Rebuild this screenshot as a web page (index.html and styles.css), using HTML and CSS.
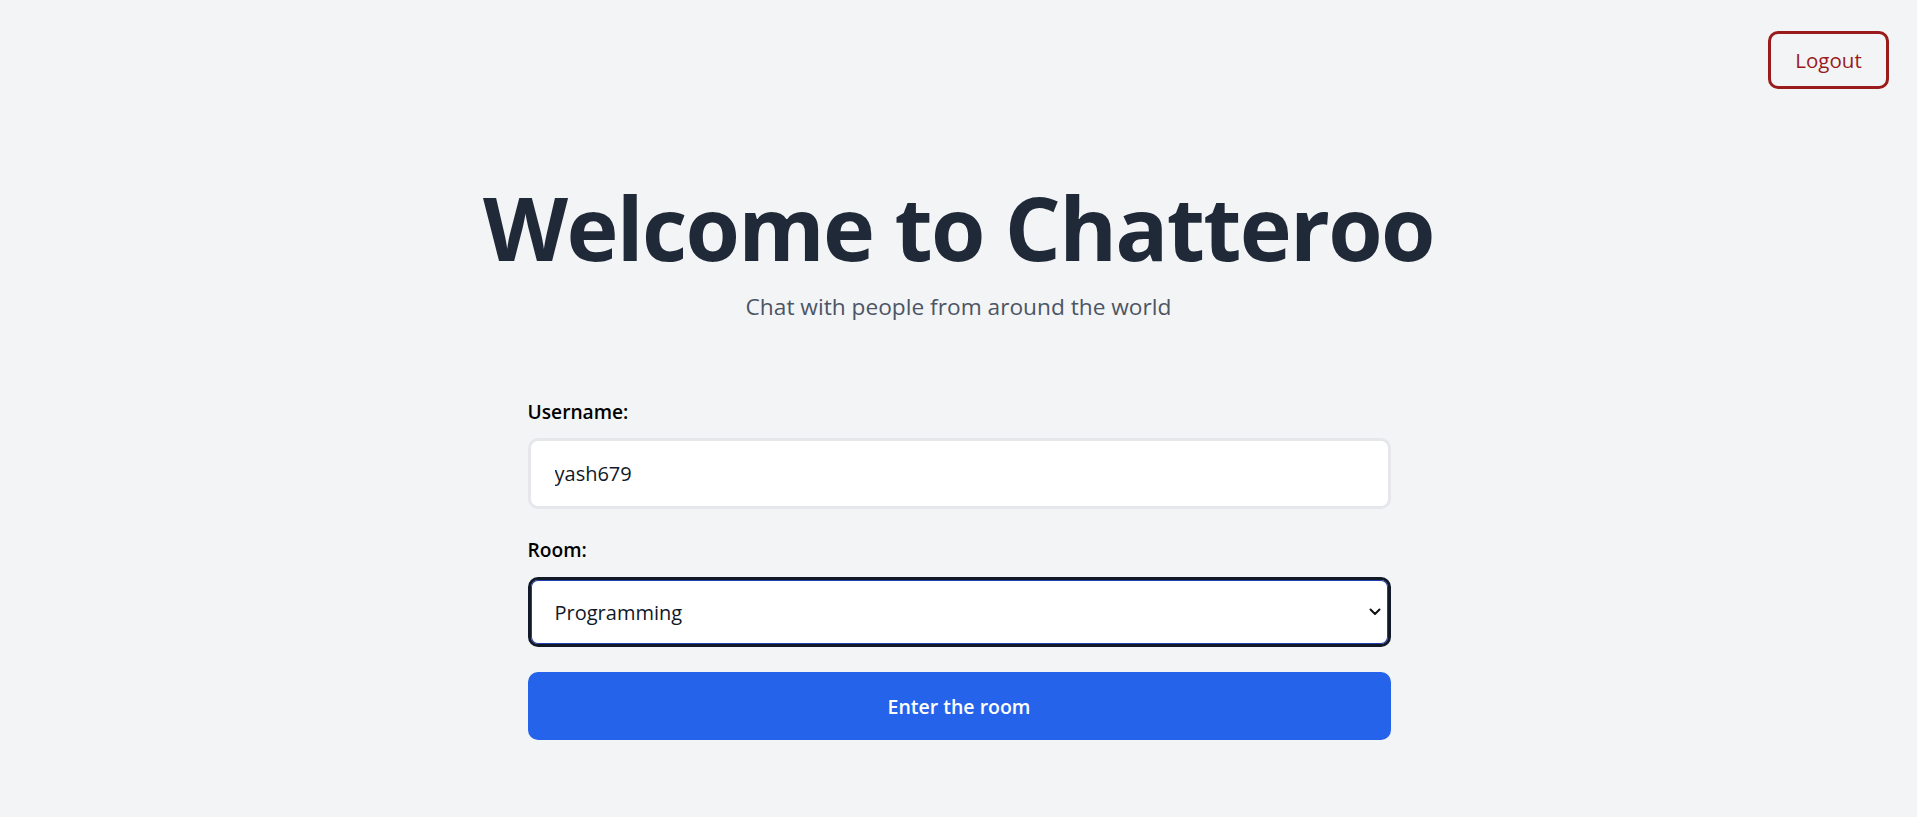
FILE: index.html
```html
<!DOCTYPE html>
<html lang="en">
<head>
<meta charset="utf-8">
<title>Chatteroo</title>
<link rel="stylesheet" href="styles.css">
</head>
<body>
  <button class="logout" type="button">Logout</button>
  <main class="main">
    <h1 class="title">Welcome to Chatteroo</h1>
    <p class="subtitle">Chat with people from around the world</p>
    <form class="form">
      <label class="label" for="username">Username:</label>
      <input class="field" id="username" type="text" value="yash679">
      <label class="label label-room" for="room">Room:</label>
      <div class="select-wrap">
        <select class="field select" id="room">
          <option>Programming</option>
          <option>General</option>
          <option>Gaming</option>
        </select>
        <svg class="chevron" width="12" height="8" viewBox="0 0 12 8" aria-hidden="true">
          <path d="M1.5 1.5 L6 6 L10.5 1.5" fill="none" stroke="#111" stroke-width="2" stroke-linecap="round" stroke-linejoin="round"/>
        </svg>
      </div>
      <button class="enter" type="button">Enter the room</button>
    </form>
  </main>
</body>
</html>
```
FILE: styles.css
```css
* { box-sizing: border-box; }

html, body {
  margin: 0;
  padding: 0;
}

body {
  background: #f3f4f6;
  font-family: "Open Sans", "Noto Sans", sans-serif;
  color: #111827;
  min-height: 817px;
}

.logout {
  position: absolute;
  top: 31px;
  right: 28px;
  width: 121px;
  height: 58px;
  border: 3px solid #991b1b;
  border-radius: 10px;
  background: transparent;
  color: #991b1b;
  font-family: inherit;
  font-size: 20.5px;
  font-weight: 500;
  padding: 0;
}

.main {
  display: flex;
  flex-direction: column;
  align-items: center;
  padding-top: 182px;
}

.title {
  margin: 0;
  font-size: 88px;
  line-height: 90px;
  font-weight: 700;
  color: #1f2937;
  letter-spacing: -1.7px;
}

.subtitle {
  margin: 19px 0 0;
  font-size: 22.7px;
  line-height: 32px;
  color: #4b5563;
}

.form {
  width: 863px;
  margin-left: 1px;
  display: flex;
  flex-direction: column;
  margin-top: 75px;
}

.label {
  font-size: 19.2px;
  line-height: 28px;
  font-weight: 600;
  color: #000;
  margin-bottom: 12px;
}

.label-room {
  margin-top: 27px;
  margin-bottom: 13px;
}

.field {
  width: 100%;
  height: 71px;
  border: 3px solid #e5e7eb;
  border-radius: 10px;
  background: #fff;
  padding: 0 24px;
  font-family: inherit;
  font-size: 20px;
  color: #111827;
  outline: none;
}

.select-wrap {
  position: relative;
}

.select {
  display: block;
  height: 70px;
  -webkit-appearance: none;
  appearance: none;
  border: 3px solid #111827;
  box-shadow: inset 0 0 0 1px #1e40af;
}

.chevron {
  position: absolute;
  right: 10px;
  top: 31px;
}

.enter {
  margin-top: 25px;
  height: 68px;
  border: none;
  border-radius: 10px;
  background: #2563eb;
  color: #fff;
  font-family: inherit;
  font-size: 19.5px;
  font-weight: 600;
}
```
